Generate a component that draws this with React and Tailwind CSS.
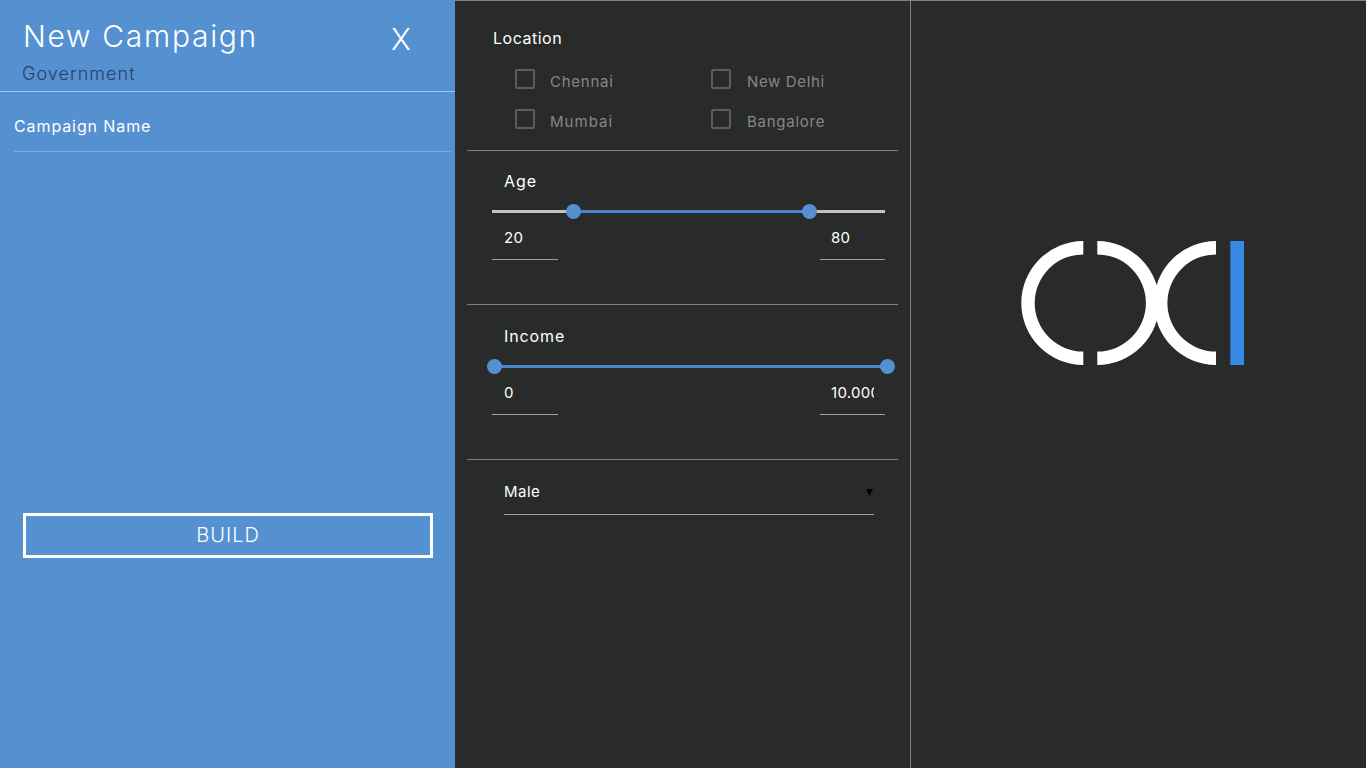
import React from "react";

const font = { fontFamily: '"Inter", "Liberation Sans", sans-serif' };

function Check({ label, gap, track }) {
  return (
    <div className="flex h-5 items-center">
      <div className="h-5 w-5 shrink-0 rounded-[2px] border-2 border-[#5c5c5c]" />
      <span className={`mt-[6px] text-[15px] text-[#858786] ${track} ${gap}`}>{label}</span>
    </div>
  );
}

function Slider({ label, from, to, left, right, base }) {
  return (
    <div className="h-[136px] border-b border-[#7f7f7f]">
      <div className="pl-[37px] text-[16px] leading-6 tracking-[0.9px] text-white">{label}</div>
      <div className={`relative ml-[25px] mt-[17px] h-[3px] w-[393px] ${base}`}>
        <div className="absolute top-0 h-[3px] bg-[#4a86cc]" style={{ left, width: right - left }} />
        <div className="absolute top-[-6px] h-[15px] w-[15px] rounded-full bg-[#5591d1]" style={{ left: left - 7.5 }} />
        <div className="absolute top-[-6px] h-[15px] w-[15px] rounded-full bg-[#5591d1]" style={{ left: right - 7.5 }} />
      </div>
      <div className="ml-[25px] mt-[11px] flex w-[393px] justify-between">
        <div className="h-[36px] w-[66px] border-b border-[#a0a0a0] pl-3 pt-[2px] text-[15px] leading-6 tracking-[0.3px] text-white">{from}</div>
        <div className="h-[36px] w-[65px] border-b border-[#a0a0a0] pl-[11px] pr-[11px] pt-[2px] text-[15px] leading-6 tracking-[0.3px] text-white">
          <div className="overflow-hidden whitespace-nowrap">{to}</div>
        </div>
      </div>
    </div>
  );
}

export default function App() {
  return (
    <div className="flex h-[768px] w-[1366px] overflow-hidden bg-[#292b2a]" style={font}>
      <div className="flex w-[455px] shrink-0 flex-col bg-[#5591d1]">
        <div className="h-[92px] border-b border-[#a5c8ef]">
          <div className="flex items-start">
            <h1 className="ml-[23px] mt-[17px] w-[368px] text-[30px] font-light leading-[38px] tracking-[1.7px] text-white">New Campaign</h1>
            <span className="mt-[20px] text-[30px] font-light leading-[38px] text-white">X</span>
          </div>
          <div className="ml-[22px] mt-[4px] text-[18px] font-light leading-[24px] tracking-[1.05px] text-[#27406a]">Government</div>
        </div>
        <div className="ml-[14px] mr-[4px] mt-[22px] h-[38px] border-b border-[#8fa5cc] text-[16px] leading-6 tracking-[0.9px] text-white">Campaign Name</div>
        <button className="ml-[23px] mt-[361px] h-[45px] w-[410px] border-[3px] border-white pb-[2px] text-[20px] font-light tracking-[1px] text-white">BUILD</button>
      </div>

      <div className="w-[456px] shrink-0 border-r border-t border-[#808080] pl-3 pr-3">
        <div className="h-[150px] border-b border-[#7f7f7f]">
          <div className="pl-[26px] pt-[25px] text-[16px] leading-6 tracking-[0.5px] text-white">Location</div>
          <div className="ml-[48px] mt-[19px] grid w-[392px] grid-cols-[196px_196px] gap-y-5">
            <Check label="Chennai" gap="ml-[15px]" track="tracking-[0.75px]" />
            <Check label="New Delhi" gap="ml-[16px]" track="tracking-[0.65px]" />
            <Check label="Mumbai" gap="ml-[15px]" track="tracking-[1.05px]" />
            <Check label="Bangalore" gap="ml-[16px]" track="tracking-[0.75px]" />
          </div>
        </div>
        <div className="pt-[18px]">
          <Slider label="Age" from="20" to="80" left={81.5} right={317.5} base="bg-[#c4c2bd]" />
        </div>
        <div className="pt-[19px]">
          <Slider label="Income" from="0" to="10.000" left={2.5} right={395.5} base="bg-[#4a86cc]" />
        </div>
        <div className="ml-[37px] mt-[19px] flex h-[36px] w-[370px] items-start justify-between border-b border-[#a0a0a0]">
          <span className="pt-px text-[15px] leading-6 tracking-[0.5px] text-white">Male</span>
          <svg className="mr-[1px] mt-[10px]" width="7" height="7" viewBox="0 0 7 7">
            <path d="M0 0H7L3.5 7Z" fill="#000" />
          </svg>
        </div>
      </div>

      <div className="flex-1 border-t border-[#808080] pl-[110px] pt-[240px]">
        <svg width="223" height="124" viewBox="0 0 223 124" className="block">
          <path d="M62.3 0A62 62 0 0 0 62.3 124V110.6A48.6 48.6 0 0 1 62.3 13.4Z" fill="#fff" />
          <path d="M76.3 0A62 62 0 0 1 76.3 124V110.6A48.6 48.6 0 0 0 76.3 13.4Z" fill="#fff" />
          <path d="M195 0A62 62 0 0 0 195 124V110.6A48.6 48.6 0 0 1 195 13.4Z" fill="#fff" />
          <rect x="209.3" y="0" width="13.7" height="124" fill="#368ae6" />
        </svg>
      </div>
    </div>
  );
}
